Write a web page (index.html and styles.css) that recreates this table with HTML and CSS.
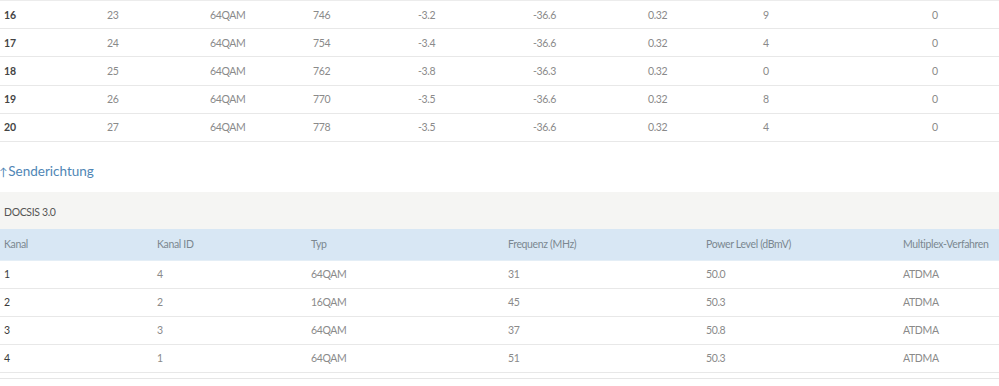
FILE: index.html
```html
<!DOCTYPE html>
<html lang="de">
<head>
<meta charset="utf-8">
<title>Kanäle</title>
<link rel="stylesheet" href="styles.css">
</head>
<body>
<table class="tbl tbl-down">
  <colgroup>
    <col class="w103"><col class="w103"><col class="w103"><col class="w105"><col class="w115"><col class="w115"><col class="w115"><col class="w169"><col>
  </colgroup>
  <tbody>
    <tr><th>16</th><td>23</td><td>64QAM</td><td>746</td><td>-3.2</td><td>-36.6</td><td>0.32</td><td>9</td><td>0</td></tr>
    <tr><th>17</th><td>24</td><td>64QAM</td><td>754</td><td>-3.4</td><td>-36.6</td><td>0.32</td><td>4</td><td>0</td></tr>
    <tr><th>18</th><td>25</td><td>64QAM</td><td>762</td><td>-3.8</td><td>-36.3</td><td>0.32</td><td>0</td><td>0</td></tr>
    <tr><th>19</th><td>26</td><td>64QAM</td><td>770</td><td>-3.5</td><td>-36.6</td><td>0.32</td><td>8</td><td>0</td></tr>
    <tr><th>20</th><td>27</td><td>64QAM</td><td>778</td><td>-3.5</td><td>-36.6</td><td>0.32</td><td>4</td><td>0</td></tr>
  </tbody>
</table>

<h3 class="section-title"><span class="arrow">&#8593;</span>Senderichtung</h3>

<div class="panel">
  <div class="panel-head">DOCSIS 3.0</div>
  <table class="tbl tbl-up">
    <colgroup>
      <col class="w153"><col class="w154"><col class="w197"><col class="w198"><col class="w197"><col>
    </colgroup>
    <thead>
      <tr><th>Kanal</th><th>Kanal ID</th><th>Typ</th><th>Frequenz (MHz)</th><th>Power Level (dBmV)</th><th>Multiplex-Verfahren</th></tr>
    </thead>
    <tbody>
      <tr><th>1</th><td>4</td><td>64QAM</td><td>31</td><td>50.0</td><td>ATDMA</td></tr>
      <tr><th>2</th><td>2</td><td>16QAM</td><td>45</td><td>50.3</td><td>ATDMA</td></tr>
      <tr><th>3</th><td>3</td><td>64QAM</td><td>37</td><td>50.8</td><td>ATDMA</td></tr>
      <tr><th>4</th><td>1</td><td>64QAM</td><td>51</td><td>50.3</td><td>ATDMA</td></tr>
    </tbody>
  </table>
  <div class="panel-foot"></div>
</div>
</body>
</html>
```

FILE: styles.css
```css
html, body {
  margin: 0;
  padding: 0;
  background: #fff;
}

body {
  font-family: "Lato", "Noto Sans", sans-serif;
  font-size: 10.5px;
  letter-spacing: -0.35px;
  color: #8a8a8a;
  width: 999px;
  overflow: hidden;
}

.tbl {
  border-collapse: collapse;
  table-layout: fixed;
  width: 1000px;
}

.w103 { width: 103px; }
.w105 { width: 105px; }
.w115 { width: 115px; }
.w169 { width: 169px; }
.w153 { width: 153px; }
.w154 { width: 154px; }
.w197 { width: 197px; }
.w198 { width: 198px; }

.tbl th,
.tbl td {
  text-align: left;
  font-weight: 400;
  padding: 0 0 0 4px;
  height: 27px;
  line-height: 14px;
  vertical-align: middle;
  border-bottom: 1px solid #e8e8e8;
  white-space: nowrap;
}

.tbl tbody th {
  color: #444;
  font-weight: 700;
  letter-spacing: 0;
}

.tbl-down {
  border-top: 1px solid #ececec;
}

.tbl-down td,
.tbl-down th {
  height: 27.2px;
}

.section-title {
  margin: 18px 0 0 0;
  height: 32px;
  font-size: 13.5px;
  letter-spacing: 0;
  font-weight: 400;
  color: #4f86b5;
  line-height: 22px;
}

.arrow {
  display: inline-block;
  font-size: 11px;
  margin-left: -1px;
  margin-right: 1px;
  color: #4f86b5;
}

.panel-head {
  background: #f5f5f3;
  height: 37px;
  line-height: 40px;
  padding-left: 4px;
  color: #555;
  font-size: 10.5px;
}

.tbl-up thead th {
  background: #d8e7f4;
  color: #7b8790;
  height: 31px;
  border-bottom: 1px solid #e4eef6;
  padding-top: 0;
}

.tbl-up tbody th {
  font-weight: 400;
  color: #3a3a3a;
}

.panel-foot {
  height: 5px;
  border-bottom: 1px solid #e6e6e6;
}
```
